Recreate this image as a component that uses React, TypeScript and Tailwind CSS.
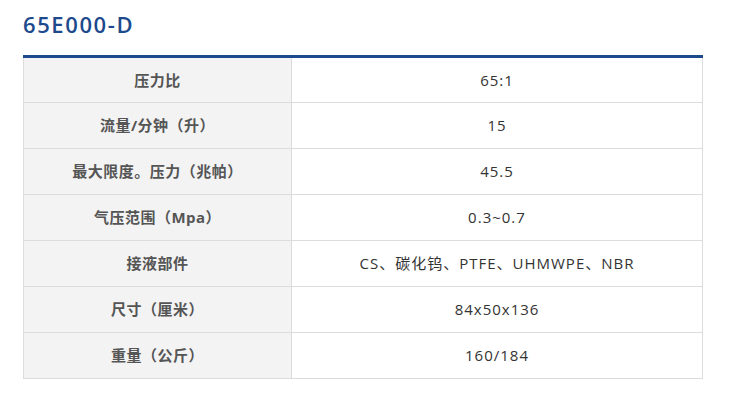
const specs: [string, string][] = [
  ["压力比", "65:1"],
  ["流量/分钟（升）", "15"],
  ["最大限度。压力（兆帕）", "45.5"],
  ["气压范围（Mpa）", "0.3~0.7"],
  ["接液部件", "CS、碳化钨、PTFE、UHMWPE、NBR"],
  ["尺寸（厘米）", "84x50x136"],
  ["重量（公斤）", "160/184"],
];

export default function App() {
  return (
    <div className="min-h-screen bg-white px-[23px] pt-[8px] font-['Open_Sans','Noto_Sans_CJK_SC',sans-serif]">
      <h2 className="text-[22px] font-semibold leading-[32px] tracking-[1.6px] text-[#1d4a8c]">65E000-D</h2>
      <table className="mt-[15px] w-[680px] border-collapse border-t-[3px] border-t-[#1d4a8c] text-[15px]">
        <tbody>
          {specs.map(([label, value]) => (
            <tr key={label} className="h-[46px]">
              <td className="w-[268px] border border-[#dcdcdc] bg-[#f3f3f3] text-center font-bold tracking-[0.5px] text-[#555]">
                {label}
              </td>
              <td className="border border-[#dcdcdc] text-center tracking-[1px] text-[#333]">{value}</td>
            </tr>
          ))}
        </tbody>
      </table>
    </div>
  );
}
